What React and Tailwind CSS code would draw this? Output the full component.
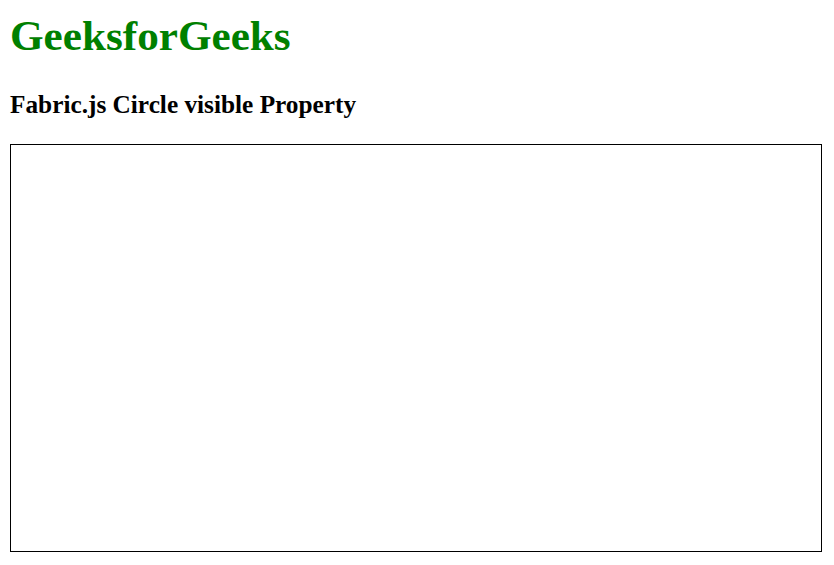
import React from "react";

export default function App() {
  return (
    <div className="min-h-screen bg-white px-[10px] pt-[11px] font-['Liberation_Serif','Times_New_Roman',serif] text-black">
      <h1 className="text-[43.2px] font-bold leading-[50px] text-[#008000]">
        GeeksforGeeks
      </h1>
      <h3 className="mt-[29px] text-[25.3px] font-bold leading-[29px]">
        Fabric.js Circle visible Property
      </h3>
      <div className="mt-[25px] h-[408px] w-[812px] border border-black bg-white"></div>
    </div>
  );
}
